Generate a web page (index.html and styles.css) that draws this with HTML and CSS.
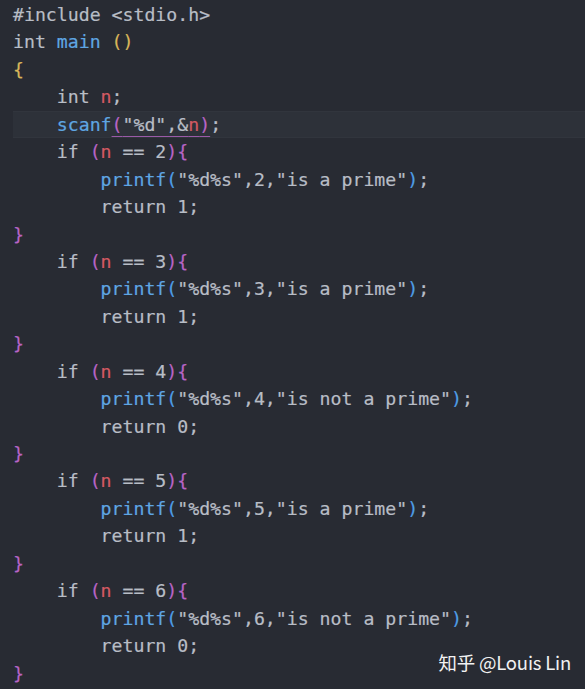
FILE: index.html
```html
<!DOCTYPE html>
<html>
<head>
<meta charset="utf-8">
<link rel="stylesheet" href="styles.css">
</head>
<body>
<div class="editor">
<pre class="code"><div class="ln">#include &lt;stdio.h&gt;</div><div class="ln">int <span class="fn">main</span> <span class="b1">()</span></div><div class="ln"><span class="b1">{</span></div><div class="ln">    int <span class="var">n</span>;</div><div class="ln cur">    <span class="fn">scanf</span><span class="ul"><span class="b2">(</span>"%d",&amp;<span class="var">n</span><span class="b2">)</span></span>;</div><div class="ln">    if <span class="b2">(</span><span class="var">n</span> == 2<span class="b2">){</span></div><div class="ln">        <span class="fn">printf</span><span class="b3">(</span>"%d%s",2,"is a prime"<span class="b3">)</span>;</div><div class="ln">        return 1;</div><div class="ln"><span class="b2">}</span></div><div class="ln">    if <span class="b2">(</span><span class="var">n</span> == 3<span class="b2">){</span></div><div class="ln">        <span class="fn">printf</span><span class="b3">(</span>"%d%s",3,"is a prime"<span class="b3">)</span>;</div><div class="ln">        return 1;</div><div class="ln"><span class="b2">}</span></div><div class="ln">    if <span class="b2">(</span><span class="var">n</span> == 4<span class="b2">){</span></div><div class="ln">        <span class="fn">printf</span><span class="b3">(</span>"%d%s",4,"is not a prime"<span class="b3">)</span>;</div><div class="ln">        return 0;</div><div class="ln"><span class="b2">}</span></div><div class="ln">    if <span class="b2">(</span><span class="var">n</span> == 5<span class="b2">){</span></div><div class="ln">        <span class="fn">printf</span><span class="b3">(</span>"%d%s",5,"is a prime"<span class="b3">)</span>;</div><div class="ln">        return 1;</div><div class="ln"><span class="b2">}</span></div><div class="ln">    if <span class="b2">(</span><span class="var">n</span> == 6<span class="b2">){</span></div><div class="ln">        <span class="fn">printf</span><span class="b3">(</span>"%d%s",6,"is not a prime"<span class="b3">)</span>;</div><div class="ln">        return 0;</div><div class="ln"><span class="b2">}</span></div></pre>
<div class="watermark">知乎 @Louis Lin</div>
</div>
</body>
</html>
```
FILE: styles.css
```css
html, body {
  margin: 0;
  padding: 0;
  background: #282b33;
}
.editor {
  position: relative;
  width: 585px;
  height: 689px;
  overflow: hidden;
  background: #282b33;
}
.code {
  margin: 0;
  padding: 1px 0 0 13px;
  font-family: "DejaVu Sans Mono", "Liberation Mono", monospace;
  font-size: 18.2px;
  line-height: 27.45px;
  color: #b8bdc6;
  white-space: pre;
  -webkit-text-stroke: 0.2px currentColor;
}
.ln {
  height: 27.45px;
}
.cur {
  background: #2d3139;
  box-shadow: inset 0 1px 0 #31353d, inset 0 -1px 0 #31353d;
}
.fn { color: #5fa6e3; }
.var { color: #d45a63; }
.b1 { color: #d9b65a; }
.b2 { color: #b864c6; }
.b3 { color: #4f9ee6; }
.ul {
  text-decoration: underline;
  text-decoration-color: #9a5aa8;
  text-underline-offset: 5px;
  text-decoration-thickness: 1px;
}
.watermark {
  position: absolute;
  right: 14px;
  top: 649px;
  font-family: "Noto Sans CJK SC", "Noto Sans", sans-serif;
  font-size: 18.5px;
  line-height: 26px;
  color: #f2f2f2;
  letter-spacing: -0.2px;
}
```
